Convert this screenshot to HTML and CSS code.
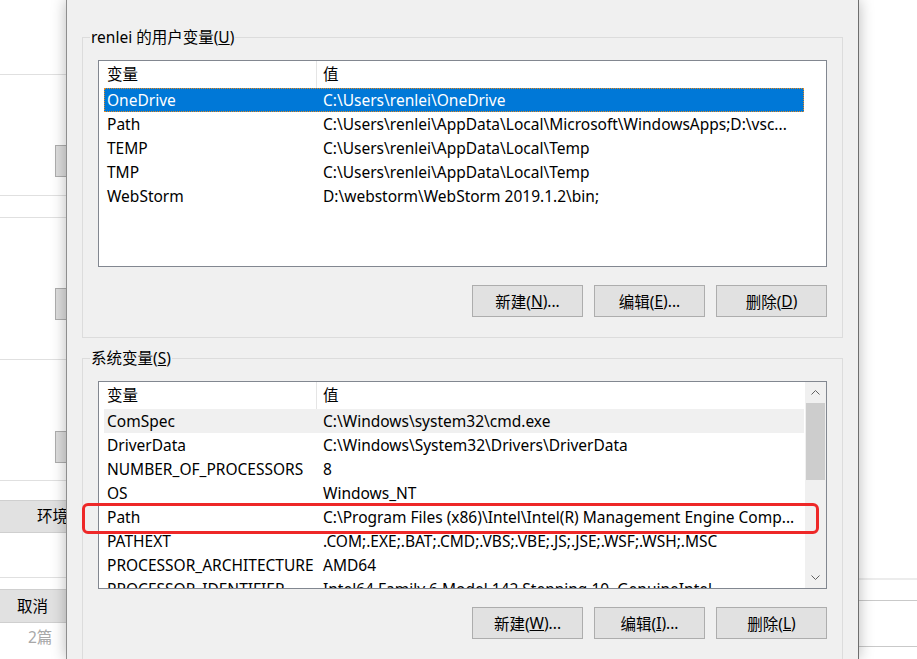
FILE: index.html
```html
<!DOCTYPE html>
<html lang="zh-CN">
<head>
<meta charset="utf-8">
<title>环境变量</title>
<link rel="stylesheet" href="styles.css">
</head>
<body>
<div class="screen">
  <div class="leftwin">
    <div class="lw-sec s1"></div>
    <div class="lw-sec s2"><div class="stub"></div></div>
    <div class="lw-sec s3"></div>
    <div class="lw-sec s4"><div class="stub"></div></div>
    <div class="lw-sec s5"><div class="stub stub-b"></div></div>
    <div class="lw-gap"></div>
    <div class="lw-bar env">环境</div>
    <div class="lw-sec s6"></div>
    <div class="lw-gap3"></div>
    <div class="lw-bar cancel">取消</div>
    <div class="lw-faded">2篇</div>
  </div>

  <div class="dialog">
    <fieldset class="group g1">
      <legend>renlei 的用户变量(<u>U</u>)</legend>
      <div class="list l1">
        <div class="list-body">
          <div class="row head"><span class="c1">变量</span><span class="c2">值</span></div>
          <div class="row sel"><span class="c1">OneDrive</span><span class="c2">C:\Users\renlei\OneDrive</span></div>
          <div class="row"><span class="c1">Path</span><span class="c2">C:\Users\renlei\AppData\Local\Microsoft\WindowsApps;D:\vsc...</span></div>
          <div class="row"><span class="c1">TEMP</span><span class="c2">C:\Users\renlei\AppData\Local\Temp</span></div>
          <div class="row"><span class="c1">TMP</span><span class="c2">C:\Users\renlei\AppData\Local\Temp</span></div>
          <div class="row"><span class="c1">WebStorm</span><span class="c2">D:\webstorm\WebStorm 2019.1.2\bin;</span></div>
        </div>
      </div>
      <div class="btns">
        <button class="btn">新建(<u>N</u>)...</button>
        <button class="btn">编辑(<u>E</u>)...</button>
        <button class="btn">删除(<u>D</u>)</button>
      </div>
    </fieldset>

    <fieldset class="group g2">
      <legend>系统变量(<u>S</u>)</legend>
      <div class="list l2">
        <div class="list-body">
          <div class="row head"><span class="c1">变量</span><span class="c2">值</span></div>
          <div class="row hover"><span class="c1">ComSpec</span><span class="c2">C:\Windows\system32\cmd.exe</span></div>
          <div class="row"><span class="c1">DriverData</span><span class="c2">C:\Windows\System32\Drivers\DriverData</span></div>
          <div class="row"><span class="c1">NUMBER_OF_PROCESSORS</span><span class="c2">8</span></div>
          <div class="row"><span class="c1">OS</span><span class="c2">Windows_NT</span></div>
          <div class="row"><span class="c1">Path</span><span class="c2">C:\Program Files (x86)\Intel\Intel(R) Management Engine Comp...</span></div>
          <div class="row"><span class="c1">PATHEXT</span><span class="c2">.COM;.EXE;.BAT;.CMD;.VBS;.VBE;.JS;.JSE;.WSF;.WSH;.MSC</span></div>
          <div class="row"><span class="c1">PROCESSOR_ARCHITECTURE</span><span class="c2">AMD64</span></div>
          <div class="row"><span class="c1">PROCESSOR_IDENTIFIER</span><span class="c2">Intel64 Family 6 Model 142 Stepping 10, GenuineIntel</span></div>
        </div>
        <div class="scroll">
          <div class="arrow"><svg width="9" height="5" viewBox="0 0 9 5"><path d="M0.5 4.5 L4.5 0.5 L8.5 4.5" fill="none" stroke="#606060" stroke-width="1"/></svg></div>
          <div class="thumb"></div>
          <div class="track"></div>
          <div class="arrow"><svg width="9" height="5" viewBox="0 0 9 5"><path d="M0.5 0.5 L4.5 4.5 L8.5 0.5" fill="none" stroke="#606060" stroke-width="1"/></svg></div>
        </div>
      </div>
      <div class="btns">
        <button class="btn">新建(<u>W</u>)...</button>
        <button class="btn">编辑(<u>I</u>)...</button>
        <button class="btn">删除(<u>L</u>)</button>
      </div>
    </fieldset>

    <div class="mark"></div>
  </div>

  <div class="rightwin">
    <div class="rw-top"></div>
    <div class="rw-band"></div>
    <div class="rw-row"></div>
    <div class="rw-row2"></div>
  </div>
</div>
</body>
</html>
```

FILE: styles.css
```css
html, body {
  margin: 0;
  padding: 0;
}

body {
  width: 917px;
  height: 659px;
  overflow: hidden;
  font-family: "Noto Sans", "Noto Sans CJK SC", sans-serif;
  font-size: 15.5px;
  color: #000;
  background: #fff;
}

.screen {
  display: flex;
  height: 659px;
}

/* ---------- background window on the left ---------- */
.leftwin {
  width: 66px;
  flex: none;
  background: #fff;
  overflow: hidden;
  display: flex;
  flex-direction: column;
}

.lw-sec {
  flex: none;
  border-bottom: 1px solid #e0e0e0;
}

.s1 { height: 74px; }
.s2 { height: 120px; }
.s3 { height: 21px; }
.s4 { height: 141px; }
.s5 { height: 120px; }
.s6 { height: 44px; }

.stub {
  margin-top: 70px;
  margin-left: 55px;
  width: 20px;
  height: 32px;
  box-sizing: border-box;
  border: 1px solid #adadad;
  background: #dcdcdc;
}

.stub-b { margin-top: 71px; }

.lw-gap { height: 19px; flex: none; }
.lw-gap3 { height: 11px; flex: none; }

.lw-bar {
  flex: none;
  background: #e1e1e1;
  border-top: 1px solid #cfcfcf;
  border-bottom: 1px solid #cfcfcf;
  white-space: nowrap;
}

.env {
  height: 31px;
  line-height: 31px;
  padding-left: 37px;
}

.cancel {
  height: 32px;
  line-height: 32px;
  padding-left: 17px;
}

.lw-faded {
  padding-left: 28px;
  color: #a8a8a8;
  line-height: 28px;
  white-space: nowrap;
}

/* ---------- dialog ---------- */
.dialog {
  width: 793px;
  flex: none;
  box-sizing: border-box;
  background: #f0f0f0;
  border-left: 1px solid #8e8e8e;
  border-right: 1px solid #6e6e6e;
  box-shadow: 0 0 14px rgba(0, 0, 0, 0.28);
  padding: 0 15px;
  position: relative;
  z-index: 1;
}

.group {
  margin: 0;
  border: 1px solid #dcdcdc;
  padding: 13px 15px 20px;
  min-width: 0;
}

.g1 { margin-top: 27px; }
.g2 { margin-top: 10px; }

legend {
  padding: 0 1px;
  margin-left: -8px;
  height: 20px;
  line-height: 20px;
  white-space: nowrap;
}

.list {
  height: 207px;
  box-sizing: border-box;
  border: 1px solid #828790;
  background: #fff;
  display: flex;
  overflow: hidden;
}

.l2 { height: 208px; }

.list-body {
  flex: 1;
  min-width: 0;
  padding-left: 5px;
  overflow: hidden;
}

.row {
  display: grid;
  grid-template-columns: 213px 487px;
  width: 700px;
  height: 24px;
  line-height: 24px;
  white-space: nowrap;
}

.row span {
  overflow: hidden;
  box-sizing: border-box;
}

.c1 { padding-left: 3px; }
.c2 { padding-left: 6px; }

.head {
  height: 27px;
  line-height: 26px;
}

.head .c1 { border-right: 1px solid #e5e5e5; }

.sel {
  background: #0078d7;
  color: #fff;
  outline: 1px dotted #e8891c;
  outline-offset: -1px;
}

.hover { background: #f0f0f0; }

.scroll {
  width: 21px;
  flex: none;
  background: #f0f0f0;
  display: flex;
  flex-direction: column;
}

.arrow {
  height: 21px;
  flex: none;
  display: flex;
  align-items: center;
  justify-content: center;
}

.thumb {
  height: 77px;
  flex: none;
  margin: 0 1px;
  background: #cdcdcd;
}

.track { flex: 1; }

.btns {
  display: flex;
  justify-content: flex-end;
  gap: 11px;
  margin-top: 18px;
}

.btn {
  width: 111px;
  height: 32px;
  box-sizing: border-box;
  border: 1px solid #adadad;
  background: #e1e1e1;
  font: inherit;
  color: #000;
  padding: 0;
  margin: 0;
  display: flex;
  align-items: center;
  justify-content: center;
}

.mark {
  position: absolute;
  left: 15px;
  top: 503px;
  width: 737px;
  height: 31px;
  box-sizing: border-box;
  border: 3px solid #ee2828;
  border-radius: 6px;
  pointer-events: none;
}

/* ---------- background window on the right ---------- */
.rightwin {
  flex: 1;
  background: #fff;
  display: flex;
  flex-direction: column;
}

.rw-top { height: 578px; flex: none; }
.rw-band { height: 2px; flex: none; background: #ececec; }
.rw-row { height: 20px; flex: none; border-bottom: 1px solid #c9c9c9; }
.rw-row2 { height: 45px; flex: none; border-bottom: 1px solid #c9c9c9; }
```
